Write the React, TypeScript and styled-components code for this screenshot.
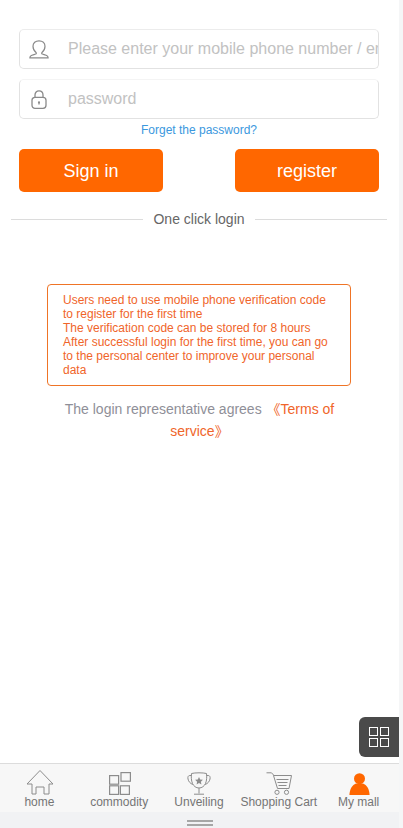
import React from 'react';
import styled, { createGlobalStyle } from 'styled-components';

const GlobalStyle = createGlobalStyle`
  html, body {
    margin: 0;
    padding: 0;
    background: #f5f6f7;
    font-family: "Liberation Sans", Arial, "Noto Sans CJK SC", sans-serif;
  }
`;

const UserIcon = () => (
  <svg width="20" height="19" viewBox="0 0 20 19" fill="none" stroke="#8a8a8a" strokeWidth="1.2">
    <path d="M7 12.500C5.200 11 4 8.700 4 6.300 4 3 6.500.8 10 .8s6 2.200 6 5.500c0 2.400-1.200 4.700-3 6.200-.6.500-.4 1.200.3 1.500 1.300.6 3.700.9 4.900 1.900.6.500.9 1 .9 1.900H.9c0-.9.300-1.400.9-1.900 1.200-1 3.600-1.300 4.900-1.900.7-.3.900-1 .3-1.500z" />
  </svg>
);

const LockIcon = () => (
  <svg width="16" height="19" viewBox="0 0 16 19" fill="none" stroke="#8a8a8a" strokeWidth="1.300">
    <path d="M4 7.500V5C4 2.500 5.700.8 8 .8s4 1.700 4 4.200v2.500" />
    <rect x="1" y="7.300" width="14" height="11" rx="3" />
    <circle cx="8" cy="12.300" r="1.100" fill="#8a8a8a" stroke="none" />
    <path d="M8 12.500v2" />
  </svg>
);

const HomeIcon = () => (
  <svg width="28" height="26" viewBox="0 0 28 26" fill="none" stroke="#8c8c8c" strokeWidth="1">
    <path d="M1 15 14 1.500 27 15h-4v10h-5v-7h-8v7H6V15z" />
  </svg>
);

const GoodsIcon = () => (
  <svg width="22" height="23" viewBox="0 0 22 23" fill="none" stroke="#8c8c8c" strokeWidth="1.200">
    <rect x="0.600" y="3.600" width="9" height="8.600" />
    <rect x="12" y="0.600" width="9.400" height="8.600" />
    <rect x="0.600" y="13.800" width="9" height="8.600" />
    <rect x="11.400" y="13.800" width="9" height="8.600" />
  </svg>
);

const TrophyIcon = () => (
  <svg width="24" height="23" viewBox="0 0 24 23" fill="none" stroke="#8c8c8c" strokeWidth="1">
    <path d="M4.500 1.500C8 .6 16 .6 19.500 1.500c.4 3.500.3 7-1 10-1.200 2.700-3.600 4.500-6.500 4.500s-5.300-1.800-6.500-4.500c-1.300-3-1.400-6.500-1-10z" />
    <path d="M4.500 3.500H2.800C1.200 3.500.6 5 1 7c.5 2.500 2.200 4.500 4.800 5.500M19.500 3.500h1.700c1.600 0 2.200 1.500 1.800 3.500-.5 2.500-2.200 4.500-4.800 5.500" />
    <path d="M12 16v5.500M7 22.200h10" />
    <path d="m12 5 1.200 2.500 2.700.3-2 1.900.5 2.700-2.400-1.300-2.400 1.300.5-2.700-2-1.900 2.700-.3z" fill="#8c8c8c" stroke="none" />
  </svg>
);

const CartIcon = () => (
  <svg width="26" height="23" viewBox="0 0 26 23" fill="none" stroke="#8c8c8c" strokeWidth="1">
    <path d="M.5.800h5l2.800 3" />
    <path d="M7.500 3.500h18L23 16.500H11.500z" />
    <path d="M10.500 7.500h12M11.500 10.500h10M12.500 13.500h8" />
    <circle cx="11" cy="20.300" r="2.100" />
    <circle cx="20.500" cy="20.300" r="2.100" />
  </svg>
);

const PersonIcon = () => (
  <svg width="21" height="22" viewBox="0 0 21 22" fill="#ff6700">
    <circle cx="10.500" cy="5.700" r="5.500" />
    <path d="M7 10.500h7c3.800 1.500 6.300 5.500 6.600 11.500H.4C.7 16 3.200 12 7 10.500z" />
  </svg>
);

const tabs = [
  { label: 'home', icon: <HomeIcon /> },
  { label: 'commodity', icon: <GoodsIcon /> },
  { label: 'Unveiling', icon: <TrophyIcon /> },
  { label: 'Shopping Cart', icon: <CartIcon /> },
  { label: 'My mall', icon: <PersonIcon /> },
];

const App = () => {
  return (
    <>
      <GlobalStyle />
      <Page>
        <Main>
          <Form>
            <Field>
              <FieldIcon><UserIcon /></FieldIcon>
              <Input type="text" placeholder="Please enter your mobile phone number / email" />
            </Field>
            <Field>
              <FieldIcon><LockIcon /></FieldIcon>
              <Input type="password" placeholder="password" />
            </Field>
            <ForgetLink href="#">Forget the password?</ForgetLink>
            <Buttons>
              <ActionButton>Sign in</ActionButton>
              <ActionButton>register</ActionButton>
            </Buttons>
          </Form>
          <Divider>One click login</Divider>
          <Notice>
            Users need to use mobile phone verification code to register for the first time
            <br />
            The verification code can be stored for 8 hours
            <br />
            After successful login for the first time, you can go to the personal center to improve your personal data
          </Notice>
          <Agreement>
            <AgreementLead>The login representative agrees</AgreementLead> <Terms>《Terms of</Terms>
            <br />
            <Terms>service》</Terms>
          </Agreement>
        </Main>
        <FloatButton aria-label="menu">
          <svg width="20" height="20" viewBox="0 0 20 20" fill="none" stroke="#fff" strokeWidth="1">
            <rect x="0.500" y="0.500" width="8" height="8" />
            <rect x="11.500" y="0.500" width="8" height="8" />
            <rect x="0.500" y="11.500" width="8" height="8" />
            <rect x="11.500" y="11.500" width="8" height="8" />
          </svg>
        </FloatButton>
        <TabBar>
          {tabs.map((tab) => (
            <Tab key={tab.label}>
              <TabIcon>{tab.icon}</TabIcon>
              <TabLabel>{tab.label}</TabLabel>
            </Tab>
          ))}
        </TabBar>
        <HomeBar>
          <Handle />
        </HomeBar>
      </Page>
    </>
  );
};

const Page = styled.div`
  position: relative;
  display: flex;
  flex-direction: column;
  width: 399px;
  height: 828px;
  overflow: hidden;
  background: #fff;
`;

const Main = styled.main`
  flex: 1;
  min-height: 0;
  padding-top: 29px;
`;

const Form = styled.form`
  display: flex;
  flex-direction: column;
  margin: 0 20px 0 19px;
`;

const Field = styled.label`
  display: flex;
  align-items: center;
  box-sizing: border-box;
  height: 40px;
  margin-bottom: 10px;
  overflow: hidden;
  border: 1px solid #e2e2e2;
  border-top-color: #ececec;
  border-radius: 5px;

  &:nth-child(2) {
    margin-bottom: 3px;
    border-top-color: #f4f4f4;
  }
`;

const FieldIcon = styled.span`
  display: flex;
  justify-content: center;
  flex: none;
  width: 37px;
  margin-right: 11px;
`;

const Input = styled.input`
  flex: 1;
  min-width: 0;
  padding: 0;
  border: 0;
  outline: 0;
  background: transparent;
  font-family: inherit;
  font-size: 16px;
  color: #333;

  &::placeholder {
    color: #c2c2c2;
    opacity: 1;
  }
`;

const ForgetLink = styled.a`
  align-self: center;
  font-size: 12px;
  line-height: 16px;
  color: #3b98de;
  text-decoration: none;
`;

const Buttons = styled.div`
  display: flex;
  justify-content: space-between;
  margin-top: 11px;
`;

const ActionButton = styled.button.attrs({ type: 'button' })`
  width: 144px;
  height: 43px;
  padding: 2px 0 0;
  border: 0;
  border-radius: 5px;
  background: #ff6700;
  font-family: inherit;
  font-size: 18px;
  color: #fff;
`;

const Divider = styled.div`
  display: flex;
  align-items: center;
  gap: 10px;
  margin: 19px 12px 0 11px;
  font-size: 14px;
  line-height: 16px;
  color: #666;

  &::before,
  &::after {
    content: '';
    flex: 1;
    height: 1px;
    background: #dcdcdc;
  }
`;

const Notice = styled.div`
  box-sizing: border-box;
  width: 304px;
  margin: 57px 0 0 47px;
  padding: 8px 15px;
  border: 1px solid #ef7426;
  border-radius: 4px;
  font-size: 12px;
  line-height: 14px;
  color: #f0652a;
`;

const Agreement = styled.p`
  margin: 12px 60px 0;
  font-size: 14px;
  line-height: 22px;
  text-align: center;
  color: #8f8f98;
`;

const AgreementLead = styled.span`
  margin-right: 1px;
`;

const Terms = styled.span`
  color: #f0652a;
`;

const FloatButton = styled.button.attrs({ type: 'button' })`
  position: absolute;
  right: 0;
  bottom: 71px;
  display: flex;
  align-items: center;
  justify-content: center;
  width: 40px;
  height: 40px;
  padding: 0;
  border: 0;
  border-radius: 6px 0 0 6px;
  background: #4a4a4a;
`;

const TabBar = styled.nav`
  display: grid;
  grid-template-columns: repeat(5, 1fr);
  box-sizing: border-box;
  height: 49px;
  border-top: 1px solid #dcdcdc;
  background: #f7f7f7;
`;

const Tab = styled.div`
  display: flex;
  flex-direction: column;
  align-items: center;
`;

const TabIcon = styled.span`
  display: flex;
  align-items: flex-end;
  justify-content: center;
  height: 31px;
`;

const TabLabel = styled.span`
  margin-right: 1px;
  font-size: 12px;
  line-height: 14px;
  white-space: nowrap;
  color: #757575;
`;

const HomeBar = styled.div`
  display: flex;
  justify-content: center;
  height: 16px;
  background: #f1f2f4;
`;

const Handle = styled.div`
  box-sizing: border-box;
  width: 26px;
  height: 6px;
  margin-top: 8px;
  border-top: 2px solid #a6a6a6;
  border-bottom: 2px solid #a6a6a6;
`;

export default App;
